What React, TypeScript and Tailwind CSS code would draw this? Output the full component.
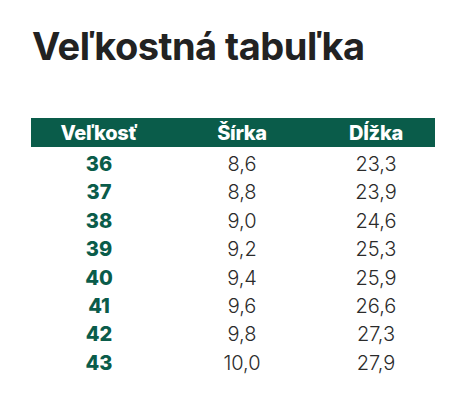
const rows: [string, string, string][] = [
  ["36", "8,6", "23,3"],
  ["37", "8,8", "23,9"],
  ["38", "9,0", "24,6"],
  ["39", "9,2", "25,3"],
  ["40", "9,4", "25,9"],
  ["41", "9,6", "26,6"],
  ["42", "9,8", "27,3"],
  ["43", "10,0", "27,9"],
];

export default function App() {
  return (
    <main className="w-[460px] h-[415px] bg-white font-['Inter',sans-serif] pt-[21px] pl-[31px]">
      <h1 className="text-[38px] leading-[50px] font-bold tracking-[-0.5px] text-[#222222] pl-px">
        Veľkostná tabuľka
      </h1>

      <div className="mt-[47px] w-[404px]">
        <div className="grid grid-cols-[136px_150px_118px] h-[29px] items-center bg-[#0a5c4a] text-white text-[20px] font-extrabold tracking-[-0.3px]">
          <div className="text-center">Veľkosť</div>
          <div className="text-center">Šírka</div>
          <div className="text-center">Dĺžka</div>
        </div>

        <div className="pt-[2px]">
          {rows.map(([size, width, length]) => (
            <div
              key={size}
              className="grid grid-cols-[136px_150px_118px] h-[28.4px] items-center text-[20px]"
            >
              <div className="text-center font-extrabold text-[#0a5c4a]">{size}</div>
              <div className="text-center font-light text-[#2b2b2b]">{width}</div>
              <div className="text-center font-light text-[#2b2b2b]">{length}</div>
            </div>
          ))}
        </div>
      </div>
    </main>
  );
}
